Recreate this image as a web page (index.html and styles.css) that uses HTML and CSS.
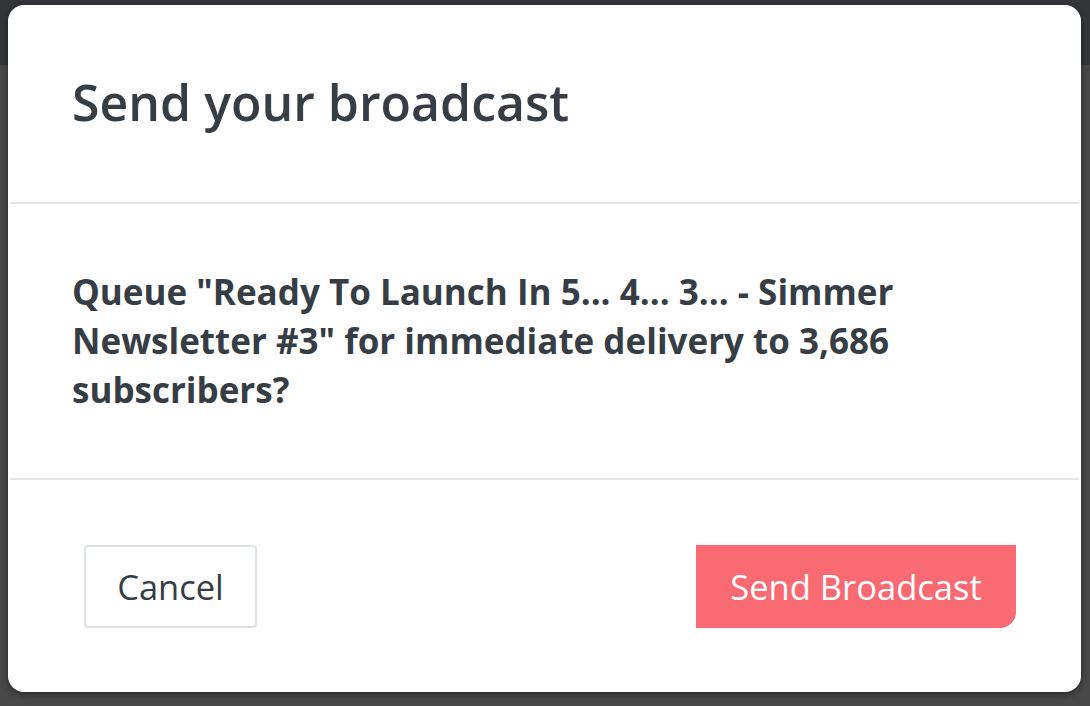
FILE: index.html
```html
<!DOCTYPE html>
<html lang="en">
<head>
<meta charset="utf-8">
<title>Send your broadcast</title>
<link rel="stylesheet" href="styles.css">
</head>
<body>
<div class="page">
  <div class="topbar"></div>
  <div class="backdrop"></div>
</div>
<div class="modal">
  <div class="modal-header">
    <h1 class="modal-title">Send your broadcast</h1>
  </div>
  <div class="modal-body">
    <p class="message">Queue "Ready To Launch In 5... 4... 3... - Simmer Newsletter #3" for immediate delivery to 3,686 subscribers?</p>
  </div>
  <div class="modal-footer">
    <button class="btn btn-cancel">Cancel</button>
    <button class="btn btn-send">Send Broadcast</button>
  </div>
</div>
</body>
</html>
```

FILE: styles.css
```css
html, body {
  margin: 0;
  padding: 0;
  height: 100%;
}
body {
  font-family: "Open Sans", "Liberation Sans", sans-serif;
  background: #474747;
  overflow: hidden;
}
.page {
  display: flex;
  flex-direction: column;
  height: 100%;
}
.topbar {
  height: 65px;
  background: #343538;
}
.backdrop {
  flex: 1;
  background: #474747;
}
.modal {
  position: absolute;
  left: 8px;
  top: 5px;
  width: 1073px;
  height: 687px;
  background: #ffffff;
  border-radius: 16px;
  box-shadow: 0 2px 6px rgba(0, 0, 0, 0.45);
  display: flex;
  flex-direction: column;
  color: #363d45;
}
.modal-header {
  height: 199px;
  box-sizing: border-box;
  padding: 0 64px 4px 62px;
  display: flex;
  align-items: center;
  border-bottom: 2px solid #e4e6e8;
  margin: 0 2px;
}
.modal-title {
  margin: 0;
  font-size: 50px;
  font-weight: 600;
  letter-spacing: 0;
}
.modal-body {
  height: 276px;
  box-sizing: border-box;
  padding: 63px 125px 0 62px;
  border-bottom: 2px solid #e4e6e8;
  margin: 0 2px;
}
.message {
  margin: 0;
  font-size: 35px;
  font-weight: 700;
  line-height: 49px;
}
.modal-footer {
  flex: 1;
  display: flex;
  align-items: center;
  justify-content: space-between;
  padding: 0 65px 0 76px;
}
.btn {
  font-family: "Open Sans", "Liberation Sans", sans-serif;
  font-size: 34.5px;
  font-weight: 400;
  height: 83px;
  box-sizing: border-box;
  cursor: pointer;
  padding: 0;
}
.btn-cancel {
  background: #ffffff;
  color: #363d45;
  border: 2px solid #dde2e5;
  border-radius: 4px;
  width: 173px;
}
.btn-send {
  background: #fa6a72;
  color: #ffffff;
  border: none;
  border-radius: 0 0 16px 0;
  width: 320px;
}
```
